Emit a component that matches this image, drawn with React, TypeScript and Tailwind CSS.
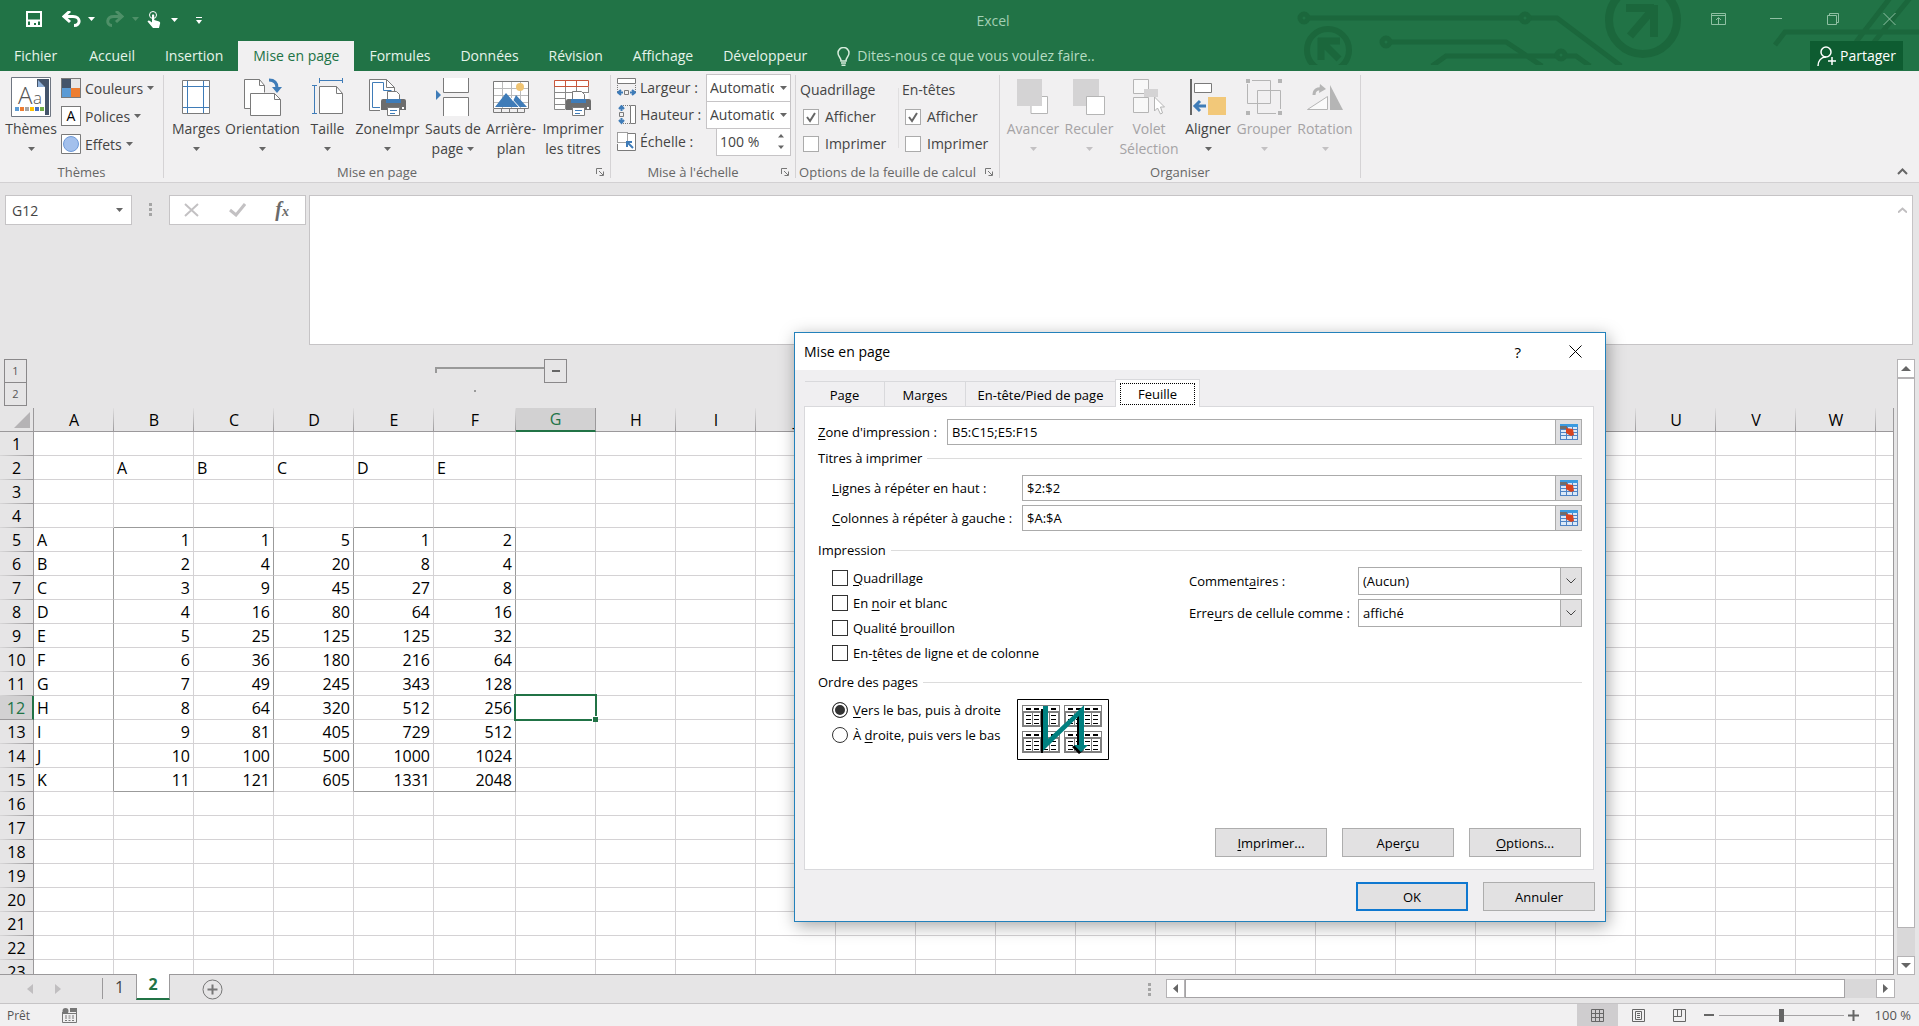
import type { ReactNode } from 'react';

const TABS = ['Accueil', 'Insertion', 'Mise en page', 'Formules', 'Données', 'Révision', 'Affichage', 'Développeur'];

const COLUMNS = 'ABCDEFGHIJKLMNOPQRSTUVWX'.split('');
const ROW_COUNT = 23;

const LETTERS = 'ABCDEFGHIJK'.split('');
const SERIES = LETTERS.map((letter, i) => {
  const n = i + 1;
  return [letter, n, n * n, 5 * n * n, n * n * n, 2 ** n];
});

function cellValue(row: number, col: number): string | number {
  if (row === 2 && col >= 1 && col <= 5) return LETTERS[col - 1];
  if (row >= 5 && row <= 15 && col <= 5) return SERIES[row - 5][col];
  return '';
}

// grey frame round the two print areas B5:C15 and E5:F15
function cellBorders(row: number, col: number) {
  const inRows = row >= 5 && row <= 15;
  const inArea = col === 1 || col === 2 || col === 4 || col === 5;
  const right = inRows && (col === 0 || col === 2 || col === 3 || col === 5);
  const bottom = inArea && (row === 4 || row === 15);
  return `${right ? 'border-r-[#9b9b9b]' : 'border-r-[#d4d2d4]'} ${bottom ? 'border-b-[#9b9b9b]' : 'border-b-[#d4d2d4]'}`;
}

/* ---------- small pieces ---------- */

function Caret({ className = 'text-[#666]' }: { className?: string }) {
  return (
    <svg width="7" height="4" viewBox="0 0 7 4" className={`shrink-0 ${className}`}>
      <path d="M0 0h7L3.5 4z" fill="currentColor" />
    </svg>
  );
}

function Launcher() {
  return (
    <button aria-label="Plus d'options" className="flex w-5 items-center justify-center">
      <svg width="8" height="8" viewBox="0 0 8 8" fill="none" stroke="#777">
        <path d="M.5 6V.5H6M3 3l4 4" />
        <path d="M7.5 3.5v4h-4" />
      </svg>
    </button>
  );
}

// underlines the access key that follows "&"
function Mnemonic({ text }: { text: string }) {
  const at = text.indexOf('&');
  if (at < 0) return <>{text}</>;
  return (
    <span className="whitespace-pre">
      {text.slice(0, at)}
      <span className="underline underline-offset-2">{text[at + 1]}</span>
      {text.slice(at + 2)}
    </span>
  );
}

/* ---------- ribbon icons ---------- */

const GREY = '#7a7a7a';
const BLUE = '#3f7cb8';

function Printer({ x, y }: { x: number; y: number }) {
  return (
    <g transform={`translate(${x} ${y})`}>
      <path d="M6.500.5h9l3 3V9h-12z" fill="#fff" stroke={GREY} />
      <path d="M2 8h21q2 0 2 2v9H0v-9q0-2 2-2z" fill="#6d6d6d" />
      <path d="M5 8h15v4H5z" fill={BLUE} />
      <path d="M21 16h2v2h-2z" fill="#fff" />
      <path d="M6.500 16.500h12v8h-12z" fill="#fff" stroke={GREY} />
      <path d="M9 19.500h7M9 22.500h5" stroke={BLUE} />
    </g>
  );
}

function ThemesIcon() {
  const swatches = ['#5b9bd5', '#ed7d31', '#a5a5a5', '#ffc000', '#4472c4', '#70ad47'];
  return (
    <svg width="40" height="40" viewBox="0 0 40 40">
      <path d="M.5.5h39v39H.5z" fill="#fff" stroke="#6f7682" />
      <path d="M2 2h26l6 7v29H2z" fill="#fff" />
      <path d="M26 2h12v36h-4V10h-8z" fill="#44546a" />
      <path d="M27 3l7 7h-7z" fill="#8fb0d8" />
      <text x="7" y="27" fontSize="24" fill="#555" fontFamily="Open Sans, sans-serif" fontWeight="300">A</text>
      <text x="22" y="27" fontSize="17" fill="#555" fontFamily="Open Sans, sans-serif" fontWeight="300">a</text>
      {swatches.map((c, i) => (
        <rect key={c} x={4 + i * 5} y="30" width="4" height="4" fill={c} />
      ))}
    </svg>
  );
}

function MarginsIcon() {
  return (
    <svg width="28" height="34" viewBox="0 0 28 34" fill="none">
      <path d="M.5.5h27v33H.5z" fill="#fff" stroke={GREY} />
      <path d="M5.500 1v32M21.500 1v32M1 6.500h26M1 27.500h26" stroke={BLUE} />
    </svg>
  );
}

function OrientationIcon() {
  return (
    <svg width="38" height="38" viewBox="0 0 38 38" fill="#fff" stroke={GREY}>
      <path d="M7 30.500H.5V1.500h15l5 6v7" />
      <path d="M15.500 1.500v6h5" fill="none" />
      <path d="M6.500 15.500h24l6 6v16h-30z" />
      <path d="M30.500 15.500v6h6" fill="none" />
      <path d="M25 2c6 0 8 3 8 8" fill="none" stroke={BLUE} strokeWidth="3" />
      <path d="M28 9h10l-5 6z" fill={BLUE} stroke="none" />
    </svg>
  );
}

function SizeIcon() {
  return (
    <svg width="32" height="37" viewBox="0 0 32 37" fill="none">
      <path d="M7.500 8.500h17l6 7v20h-23z" fill="#fff" stroke={GREY} />
      <path d="M24.500 8.500v7h6" stroke={GREY} />
      <path d="M7.500 0v5M30.500 0v5M8 2.500h22M0 7.500h5M0 35.500h5M2.500 8v27" stroke={BLUE} />
    </svg>
  );
}

function PrintAreaIcon() {
  return (
    <svg width="38" height="38" viewBox="0 0 38 38" fill="none">
      <path d="M11 32.500H.5v-31h17l8 8v5" fill="#fff" stroke={GREY} />
      <path d="M17.500 1.500v8h8" stroke={GREY} />
      <path d="M11 29.500H3.500v-25h11v8h8" stroke={BLUE} />
      <Printer x={12} y={13} />
    </svg>
  );
}

function BreaksIcon() {
  return (
    <svg width="34" height="38" viewBox="0 0 34 38" fill="none">
      <path d="M7.500 0v14.500h25V0M7.500 38V19.500h25V38" fill="#fff" stroke={GREY} />
      <path d="M0 12l5 5-5 5z" fill={BLUE} />
    </svg>
  );
}

function BackgroundIcon() {
  return (
    <svg width="36" height="32" viewBox="0 0 36 32" fill="none">
      <path d="M.5.5h35v27H.5z" fill="#fff" stroke={GREY} />
      <path d="M9.500 1v26M18.500 1v26M27.500 1v26M1 7.500h34M1 14.500h34M1 21.500h34" stroke="#bbb" />
      <path d="M2 26l11-14 7 8 3-6 11 12z" fill={BLUE} />
      <path d="M18 17l9 10" stroke="#fff" />
      <circle cx="27" cy="6" r="4" fill="#f0c473" />
      <path d="M.5 28v3.500h31V28M8.500 28v3M16.500 28v3M24.500 28v3" stroke={GREY} />
    </svg>
  );
}

function PrintTitlesIcon() {
  return (
    <svg width="38" height="38" viewBox="0 0 38 38" fill="none">
      <path d="M.5 2.500h34v29H.5z" fill="#fff" />
      <path d="M.5 8v23.500h11M1 14.500h33M1 20.500h11M1 26.500h11M11.500 9v22M22.500 9v6M34.500 9v6" stroke="#8a8a8a" />
      <path d="M.5 2.500h34v6H.5zM11.500 3v5M22.500 3v5" stroke="#c8553a" />
      <Printer x={12} y={13} />
    </svg>
  );
}

function ForwardIcon() {
  return (
    <svg width="32" height="36" viewBox="0 0 32 36" fill="none">
      <path d="M14 17.500h16.500v17H14z" fill="#fff" stroke="#b5b5b5" />
      <path d="M0 0h25v27H0z" fill="#d4d3d4" />
    </svg>
  );
}

function BackwardIcon() {
  return (
    <svg width="32" height="36" viewBox="0 0 32 36" fill="none">
      <path d="M0 0h26v27H0z" fill="#d4d3d4" />
      <path d="M13.500 17.500h18v18h-18z" fill="#fff" stroke="#b5b5b5" />
    </svg>
  );
}

function SelectionIcon() {
  return (
    <svg width="32" height="36" viewBox="0 0 32 36" fill="none" stroke="#b5b5b5">
      <path d="M.5.500h15v14H.5zM.5 18.500h15v15H.5z" fill="#f8f8f8" />
      <path d="M11 10h14v8H11z" fill="#d4d3d4" stroke="none" />
      <path d="M21.500 18v14l3-3 3 6 2-1-2-6h4z" fill="#fff" />
    </svg>
  );
}

function AlignIcon() {
  return (
    <svg width="36" height="36" viewBox="0 0 36 36" fill="none">
      <path d="M1 0v36" stroke="#666" strokeWidth="2" />
      <path d="M4.500 4.500h17v9h-17z" fill="#fff" stroke={GREY} />
      <path d="M18 18h18v18H18z" fill="#f2c879" />
      <path d="M16 27H6M10 22l-5 5 5 5" stroke={BLUE} strokeWidth="3" />
    </svg>
  );
}

function GroupIcon() {
  return (
    <svg width="36" height="36" viewBox="0 0 36 36" fill="none" stroke="#b5b5b5">
      <path d="M1.500 5v19.500h23v-23H6M11.500 11.500h23V30M30 34.500H11.500v-23" />
      <path d="M0 0h4v4H0zM32 0h4v4h-4zM0 32h4v4H0zM32 32h4v4h-4z" fill="#b5b5b5" stroke="none" />
    </svg>
  );
}

function RotateIcon() {
  return (
    <svg width="36" height="26" viewBox="0 0 36 26" fill="none" stroke="#b5b5b5">
      <path d="M.5 25.500l20-13v13z" fill="#fafafa" />
      <path d="M23 1v25h13z" fill="#b5b5b5" stroke="none" />
      <path d="M7 11c0-5 3-7 9-6" strokeWidth="3" />
      <path d="M13 0l6 5-7 4z" fill="#b5b5b5" stroke="none" />
    </svg>
  );
}

function WidthIcon() {
  return (
    <svg width="19" height="20" viewBox="0 0 19 20" fill="none">
      <path d="M.5.500h18v5H.5z" fill="#fff" stroke={GREY} />
      <path d="M.5 7v7M18.500 7v7" stroke={GREY} strokeDasharray="1 1" />
      <path d="M7.500 12.500h4v4h-4z" stroke={GREY} />
      <path d="M6 14.500H1M4 12l-3 2.500L4 17M13 14.500h5M15 12l3 2.500-3 2.500" stroke={BLUE} strokeWidth="2" />
    </svg>
  );
}

function HeightIcon() {
  return (
    <svg width="19" height="20" viewBox="0 0 19 20" fill="none">
      <path d="M13.500.500h5v18h-5z" fill="#fff" stroke={GREY} />
      <path d="M6 .5h7M6 18.500h7" stroke={GREY} strokeDasharray="1 1" />
      <path d="M2.500 7.500h4v4h-4z" stroke={GREY} />
      <path d="M4.500 6V1M2 4l2.500-3L7 4M4.500 13v5M2 15l2.500 3L7 15" stroke={BLUE} strokeWidth="2" />
    </svg>
  );
}

function ScaleIcon() {
  return (
    <svg width="19" height="20" viewBox="0 0 19 20" fill="none">
      <path d="M11 1.500h7.500v17H.5V12" fill="#fff" stroke={GREY} />
      <path d="M.5.500h10v10H.5z" fill="#fff" stroke="#444" strokeDasharray="1 1" />
      <path d="M10 10l6 6M10 15v-5h5" stroke={BLUE} strokeWidth="2" />
    </svg>
  );
}

/* ---------- ribbon ---------- */

function BigButton({ icon, lines, width, caret, disabled }: {
  icon: ReactNode;
  lines: string[];
  width: string;
  caret?: 'below' | 'inline';
  disabled?: boolean;
}) {
  return (
    <button
      disabled={disabled}
      className={`flex flex-col items-center leading-5 whitespace-nowrap ${width} ${disabled ? 'text-[#a5a3a5]' : 'text-[#444]'}`}
    >
      <span className="flex h-[45px] items-center justify-center">{icon}</span>
      <span>{lines[0]}</span>
      <span className="flex h-5 items-center gap-1">
        {lines[1]}
        {caret && <Caret className={disabled ? 'text-[#c3c1c3]' : 'text-[#666]'} />}
      </span>
    </button>
  );
}

function SmallButton({ icon, label }: { icon: ReactNode; label: string }) {
  return (
    <button className="flex h-7 items-center gap-1">
      {icon}
      <span>{label}</span>
      <Caret />
    </button>
  );
}

function Group({ label, launcher, children }: { label: string; launcher?: boolean; children: ReactNode }) {
  return (
    <>
      <section className="flex shrink-0 flex-col">
        <div className="flex h-[91px] items-start">{children}</div>
        <div className="flex h-5 text-[13px] leading-5 text-[#666]">
          <span className="flex-1 text-center">{label}</span>
          {launcher && <Launcher />}
        </div>
      </section>
      <div className="my-1 w-px shrink-0 bg-[#d5d3d5]" />
    </>
  );
}

function RibbonCheck({ label, checked, name }: { label: string; checked?: boolean; name: string }) {
  return (
    <label className="flex h-[27px] items-center gap-1.5 whitespace-nowrap">
      <span className="grid size-4">
        <input
          type="checkbox"
          name={name}
          defaultChecked={checked}
          className="peer col-start-1 row-start-1 size-4 appearance-none border border-[#ababab] bg-white"
        />
        <svg viewBox="0 0 16 16" className="pointer-events-none invisible col-start-1 row-start-1 peer-checked:visible">
          <path d="M4 8l3 4 5-8" fill="none" stroke="#666" strokeWidth="2" />
        </svg>
      </span>
      {label}
    </label>
  );
}

function AutoSelect({ id, icon, label }: { id: string; icon: ReactNode; label: string }) {
  return (
    <div className="flex h-[27px] items-center">
      {icon}
      <label htmlFor={id} className="w-[70px] pl-1">{label}</label>
      <div className="grid h-7 w-[85px] grid-cols-1 items-center">
        <select
          id={id}
          className="col-start-1 row-start-1 h-7 w-full min-w-0 appearance-none border border-[#c6c4c6] bg-white pr-4 pl-[3px]"
        >
          <option>Automatique</option>
        </select>
        <Caret className="pointer-events-none col-start-1 row-start-1 mr-1 justify-self-end text-[#666]" />
      </div>
    </div>
  );
}

function Ribbon() {
  return (
    <div className="flex h-[112px] shrink-0 border-b border-[#d2d0d2] bg-[#f1f0f1] text-[14px] text-[#444]">
      <Group label="Thèmes">
        <div className="flex w-[163px] items-start gap-1 pt-[3px] pl-[5px]">
          <BigButton icon={<ThemesIcon />} lines={['Thèmes']} width="w-[52px]" caret="below" />
          <div className="flex flex-col">
            <SmallButton
              label="Couleurs"
              icon={
                <svg width="20" height="20" viewBox="0 0 20 20">
                  <path d="M0 0h20v20H0z" fill="#7a7a7a" />
                  <path d="M1 1h9v9H1z" fill="#44546a" />
                  <path d="M10 1h9v9h-9z" fill="#e7e6e6" />
                  <path d="M1 10h9v9H1z" fill="#5b9bd5" />
                  <path d="M10 10h9v9h-9z" fill="#ed7d31" />
                </svg>
              }
            />
            <SmallButton
              label="Polices"
              icon={
                <span className="flex size-5 items-center justify-center border border-[#7a7a7a] bg-white text-[14px] leading-4 text-black">
                  A
                </span>
              }
            />
            <SmallButton
              label="Effets"
              icon={
                <svg width="20" height="20" viewBox="0 0 20 20">
                  <path d="M.5.500h19v19H.5z" fill="#fff" stroke="#7a7a7a" />
                  <circle cx="10" cy="10" r="7.500" fill="#a3c0ec" stroke="#6f9ad8" />
                </svg>
              }
            />
          </div>
        </div>
      </Group>

      <Group label="Mise en page" launcher>
        <div className="flex pt-[3px] pr-[3px] pl-[6px]">
          <BigButton icon={<MarginsIcon />} lines={['Marges']} width="w-[52px]" caret="below" />
          <BigButton icon={<OrientationIcon />} lines={['Orientation']} width="w-[81px]" caret="below" />
          <BigButton icon={<SizeIcon />} lines={['Taille']} width="w-[49px]" caret="below" />
          <BigButton icon={<PrintAreaIcon />} lines={['ZoneImpr']} width="w-[71px]" caret="below" />
          <BigButton icon={<BreaksIcon />} lines={['Sauts de', 'page']} width="w-[60px]" caret="inline" />
          <BigButton icon={<BackgroundIcon />} lines={['Arrière-', 'plan']} width="w-[56px]" />
          <BigButton icon={<PrintTitlesIcon />} lines={['Imprimer', 'les titres']} width="w-[68px]" />
        </div>
      </Group>

      <Group label="Mise à l'échelle" launcher>
        <div className="flex flex-col pt-[3px] pr-1 pl-[6px]">
          <AutoSelect id="largeur" label="Largeur :" icon={<WidthIcon />} />
          <AutoSelect id="hauteur" label="Hauteur :" icon={<HeightIcon />} />
          <div className="flex h-[27px] items-center">
            <ScaleIcon />
            <label htmlFor="echelle" className="w-20 pl-1">Échelle :</label>
            <div className="flex h-7 w-[75px] items-center border border-[#c6c4c6] bg-white pr-[5px] pl-[3px]">
              <input id="echelle" defaultValue="100 %" className="w-full min-w-0 flex-1 outline-none" />
              <svg width="7" height="15" viewBox="0 0 7 15" fill="#666">
                <path d="M0 3.500h6L3 0zM0 11.500h6L3 15z" />
              </svg>
            </div>
          </div>
        </div>
      </Group>

      <Group label="Options de la feuille de calcul" launcher>
        <div className="flex pt-[5px] pr-4 pl-1">
          <div className="flex w-[98px] flex-col">
            <span className="h-[27px] leading-[27px]">Quadrillage</span>
            <div className="pl-[3px]">
              <RibbonCheck label="Afficher" name="quadrillage-afficher" checked />
              <RibbonCheck label="Imprimer" name="quadrillage-imprimer" />
            </div>
          </div>
          <div className="mt-3 h-[60px] w-px bg-[#e0dfe0]" />
          <div className="flex w-[84px] flex-col pl-[3px]">
            <span className="h-[27px] leading-[27px]">En-têtes</span>
            <div className="pl-[3px]">
              <RibbonCheck label="Afficher" name="entetes-afficher" checked />
              <RibbonCheck label="Imprimer" name="entetes-imprimer" />
            </div>
          </div>
        </div>
      </Group>

      <Group label="Organiser">
        <div className="flex pt-[3px] pr-[3px] pl-[5px]">
          <BigButton icon={<ForwardIcon />} lines={['Avancer']} width="w-[56px]" caret="below" disabled />
          <BigButton icon={<BackwardIcon />} lines={['Reculer']} width="w-[56px]" caret="below" disabled />
          <BigButton icon={<SelectionIcon />} lines={['Volet', 'Sélection']} width="w-[64px]" disabled />
          <BigButton icon={<AlignIcon />} lines={['Aligner']} width="w-[54px]" caret="below" />
          <BigButton icon={<GroupIcon />} lines={['Grouper']} width="w-[58px]" caret="below" disabled />
          <BigButton icon={<RotateIcon />} lines={['Rotation']} width="w-[64px]" caret="below" disabled />
        </div>
      </Group>

      <button aria-label="Réduire le ruban" className="mr-[11px] mb-[7px] ml-auto self-end">
        <svg width="11" height="7" viewBox="0 0 11 7" fill="none" stroke="#666" strokeWidth="2">
          <path d="M1 6l4.500-4.500L10 6" />
        </svg>
      </button>
    </div>
  );
}

/* ---------- title bar ---------- */

function Circuit() {
  return (
    <svg
      width="629"
      height="65"
      viewBox="0 0 629 65"
      fill="none"
      stroke="#1b673c"
      className="pointer-events-none absolute top-0 right-0"
    >
      <g strokeWidth="5">
        <circle cx="14" cy="18" r="4" />
        <path d="M19 18h211M240 18h27l64 48" />
        <circle cx="235" cy="18" r="4" />
        <circle cx="96" cy="42" r="4" />
        <path d="M101 42h115l36 24M142 66l14-10h110" />
        <circle cx="271" cy="55" r="4" />
        <path d="M276 56h10l14 10M485 45l10-13h134M566 42l34-44M584 42l36-44" />
      </g>
      <circle cx="38" cy="50" r="21" strokeWidth="6" />
      <path d="M28 41h22M31 38v22M31 41l18 18" strokeWidth="7" />
      <circle cx="353" cy="20" r="34" strokeWidth="8" />
      <path d="M336 8h28M364 5v32M364 8l-24 28" strokeWidth="8" />
    </svg>
  );
}

function TitleBar() {
  return (
    <header className="relative flex shrink-0 flex-col bg-[#217346] text-[14px] text-[#e6f4ea]">
      <Circuit />
      <div className="relative flex h-[41px]">
        <div className="flex w-[286px] items-start pt-[11px] pl-[26px]">
          <button aria-label="Enregistrer">
            <svg width="16" height="16" viewBox="0 0 16 16" fill="none" stroke="#fff" strokeWidth="2">
              <path d="M1 1h14v14H1zM1 9.500h14" />
              <path d="M5 15v-4h6v4M7 12v3" />
            </svg>
          </button>
          <button aria-label="Annuler" className="ml-5 flex items-center gap-[7px]">
            <svg width="19" height="16" viewBox="0 0 19 16" fill="none" stroke="#fff" strokeWidth="3">
              <path d="M3 5.500h8c8 0 8 9 1 9" />
              <path d="M8 0L2 5.500 8 11" />
            </svg>
            <Caret className="text-white" />
          </button>
          <button aria-label="Rétablir" disabled className="ml-[10px] flex items-center gap-2">
            <svg width="19" height="16" viewBox="0 0 19 16" fill="none" stroke="#4e9068" strokeWidth="3">
              <path d="M16 5.500H9c-8 0-8 9-2 9" />
              <path d="M11 0l6 5.500L11 11" />
            </svg>
            <Caret className="text-[#4e9068]" />
          </button>
          <button aria-label="Mode tactile" className="ml-2 flex items-center gap-[10px]">
            <svg width="14" height="17" viewBox="0 0 14 17">
              <circle cx="6" cy="4" r="3.500" fill="none" stroke="#fff" />
              <path d="M5 4q1-1.500 2.200 0v5l5 1.500q1 .5 1 1.500L12 17H6L.5 10.500q1-1.500 2.500-.5l2 1.500z" fill="#fff" />
            </svg>
            <Caret className="text-white" />
          </button>
          <button aria-label="Personnaliser la barre" className="mt-[6px] ml-[18px]">
            <svg width="6" height="7" viewBox="0 0 6 7" fill="#fff">
              <path d="M0 0h6v1H0zM0 3h6L3 7z" />
            </svg>
          </button>
        </div>
        <h1 className="flex-1 text-center leading-[41px] text-[#a3cfb4]">Excel</h1>
        <div className="flex w-[219px] items-start justify-between pt-[13px] pr-[23px] pl-[11px] text-[#8fc0a3]">
          <button aria-label="Options du ruban">
            <svg width="15" height="12" viewBox="0 0 15 12" fill="none" stroke="currentColor">
              <path d="M.5.500h14v11H.5zM1 2.500h13M7.500 11V5M5 7l2.500-2.500L10 7" />
            </svg>
          </button>
          <button aria-label="Réduire">
            <svg width="12" height="12" viewBox="0 0 12 12" stroke="currentColor">
              <path d="M0 5.500h12" />
            </svg>
          </button>
          <button aria-label="Niveau inférieur">
            <svg width="12" height="12" viewBox="0 0 12 12" fill="none" stroke="currentColor">
              <path d="M.5 2.500h9v9h-9zM2.500 2V.500h9v9H10" />
            </svg>
          </button>
          <button aria-label="Fermer">
            <svg width="13" height="12" viewBox="0 0 13 12" fill="none" stroke="currentColor">
              <path d="M.5 0l12 12M12.500 0l-12 12" />
            </svg>
          </button>
        </div>
      </div>
      <nav className="relative flex h-[30px] items-stretch leading-[30px] whitespace-nowrap">
        <button className="pr-[17px] pl-[14px]">Fichier</button>
        {TABS.map((tab) => (
          <button
            key={tab}
            className={tab === 'Mise en page' ? 'bg-[#f1f0f1] px-[15px] text-[#217346]' : 'px-[15px]'}
          >
            {tab}
          </button>
        ))}
        <div className="ml-[15px] flex items-center gap-[7px]">
          <svg width="13" height="19" viewBox="0 0 13 19" fill="none" stroke="#d5ecdc" strokeWidth="1.500">
            <path d="M4 14c0-4-3-4-3-8a5.500 5.500 0 0 1 11 0c0 4-3 4-3 8zM4 16h5M4.500 18.200h4" />
          </svg>
          <input
            aria-label="Dites-nous"
            placeholder="Dites-nous ce que vous voulez faire.."
            className="w-[270px] bg-transparent outline-none placeholder:text-[#b5dcc2]"
          />
        </div>
        <button className="mr-4 mb-px ml-auto flex w-[93px] items-center gap-1 bg-[#0e5c31] pl-[7px] text-white">
          <svg width="19" height="20" viewBox="0 0 19 20" fill="none" stroke="#fff" strokeWidth="1.500">
            <circle cx="9" cy="6" r="5" />
            <path d="M1 20c0-5 3-9 8-9M15 11v8M11 15h8" />
          </svg>
          Partager
        </button>
      </nav>
    </header>
  );
}

/* ---------- formula bar and outline ---------- */

function FormulaBar() {
  return (
    <div className="flex shrink-0 items-start pt-3 pr-[6px] pl-[5px]">
      <div className="flex h-[30px] w-[127px] items-center border border-[#c6c4c6] bg-white pr-2 pl-[6px]">
        <input aria-label="Zone Nom" defaultValue="G12" className="w-full min-w-0 flex-1 text-[14px] text-[#444] outline-none" />
        <Caret />
      </div>
      <svg width="3" height="14" viewBox="0 0 3 14" fill="#a5a5a5" className="mx-[17px] mt-2">
        <path d="M0 0h3v3H0zM0 5h3v3H0zM0 10h3v3H0z" />
      </svg>
      <div className="flex h-[30px] w-[137px] items-center justify-between border border-[#c6c4c6] bg-white pr-4 pl-[14px]">
        <button aria-label="Annuler la saisie" disabled>
          <svg width="15" height="14" viewBox="0 0 15 14" fill="none" stroke="#c3c1c3" strokeWidth="2">
            <path d="M1 1l13 12M14 1L1 13" />
          </svg>
        </button>
        <button aria-label="Entrer" disabled>
          <svg width="17" height="14" viewBox="0 0 17 14" fill="none" stroke="#c3c1c3" strokeWidth="3">
            <path d="M1 7l6 5 9-11" />
          </svg>
        </button>
        <button aria-label="Insérer une fonction" className="font-['Liberation_Serif',serif] text-[20px] leading-6 font-bold text-[#6a6a6a] italic">
          f<span className="text-[14px]">x</span>
        </button>
      </div>
      <div className="ml-[3px] flex h-[150px] flex-1 border border-[#c6c4c6] bg-white">
        <textarea aria-label="Barre de formule" className="flex-1 resize-none outline-none" />
        <svg width="9" height="6" viewBox="0 0 9 6" fill="none" stroke="#c0bec0" strokeWidth="2" className="mt-[11px] mr-[5px]">
          <path d="M0 5.500l4.500-4 4.500 4" />
        </svg>
      </div>
    </div>
  );
}

const outlineButton = 'flex h-6 w-[23px] items-center justify-center border border-[#8a888a] text-[11px] text-[#555]';

function Outline() {
  return (
    <div className="flex h-[49px] shrink-0 items-start">
      <div className="flex w-[431px] flex-col pl-1">
        <button className={outlineButton}>1</button>
        <button className={`${outlineButton} -mt-px`}>2</button>
      </div>
      <svg width="109" height="40" viewBox="0 0 109 40" className="ml-1">
        <path d="M1 14V9h108" fill="none" stroke="#999" strokeWidth="2" />
        <path d="M39 31h2v2h-2z" fill="#999" />
      </svg>
      <button aria-label="Masquer le détail" className={outlineButton}>
        <svg width="8" height="2" viewBox="0 0 8 2"><path d="M0 0h8v2H0z" fill="#666" /></svg>
      </button>
    </div>
  );
}

/* ---------- sheet ---------- */

function Sheet() {
  return (
    <div className="min-w-0 flex-1 overflow-hidden border-r border-b border-[#9b999b] bg-[linear-gradient(to_bottom,#e6e5e6_24px,#fff_24px)]">
      <table className="w-[1956px] table-fixed border-separate border-spacing-0 text-[16px] leading-[21px] text-black">
        <colgroup>
          <col className="w-[34px]" />
          {COLUMNS.map((c) => (
            <col key={c} className={c === 'F' ? 'w-[82px]' : 'w-[80px]'} />
          ))}
        </colgroup>
        <thead>
          <tr className="h-6">
            <th className="border-r border-b border-[#9b999b] bg-[#e6e5e6] p-0">
              <svg width="16" height="16" viewBox="0 0 16 16" className="mr-[3px] ml-auto">
                <path d="M16 0v16H0z" fill="#b5b3b5" />
              </svg>
            </th>
            {COLUMNS.map((c) => (
              <th
                key={c}
                className={
                  c === 'G'
                    ? 'border-r border-b-2 border-r-[#9b999b] border-b-[#217346] bg-[#d2d1d2] p-0 pt-px font-normal text-[#217346]'
                    : 'border-b border-[#9b999b] bg-[#e6e5e6] bg-[linear-gradient(to_bottom,#e0dfe0,#9b999b)] bg-[length:1px_100%] bg-right bg-no-repeat p-0 pt-0.5 font-normal'
                }
              >
                {c}
              </th>
            ))}
          </tr>
        </thead>
        <tbody>
          {Array.from({ length: ROW_COUNT }, (_, i) => i + 1).map((row) => (
            <tr key={row} className="h-6">
              <th
                className={
                  row === 12
                    ? 'border-r-2 border-b border-r-[#217346] border-b-[#9b999b] bg-[#d2d1d2] p-0 pt-0.5 font-normal text-[#217346]'
                    : 'border-r border-[#9b999b] bg-[#e6e5e6] bg-[linear-gradient(to_right,#d8d7d8,#9b999b)] bg-[length:100%_1px] bg-bottom bg-no-repeat p-0 pt-px font-normal'
                }
              >
                {row}
              </th>
              {COLUMNS.map((c, col) => {
                const value = cellValue(row, col);
                return (
                  <td
                    key={c}
                    className={`relative border-r border-b px-[3px] pt-0.5 pb-0 ${cellBorders(row, col)} ${typeof value === 'number' ? 'text-right' : 'text-left'}`}
                  >
                    {value}
                    {row === 12 && c === 'G' && (
                      <span className="absolute -inset-[2px] z-10 border-2 border-[#217346]">
                        <span className="absolute -right-[3px] -bottom-[3px] size-[6px] border-t border-l border-white bg-[#217346]" />
                      </span>
                    )}
                  </td>
                );
              })}
            </tr>
          ))}
        </tbody>
      </table>
    </div>
  );
}

function VerticalScroll() {
  const end = 'flex h-[19px] items-center justify-center border border-[#b5b3b5] bg-white';
  return (
    <div className="mr-1 ml-[3px] flex w-[18px] flex-col bg-[#d9d8d9]">
      <button aria-label="Défiler vers le haut" className={end}>
        <svg width="10" height="5" viewBox="0 0 10 5"><path d="M0 5h10L5 0z" fill="#666" /></svg>
      </button>
      <div className="mb-7 flex-1 border border-[#b5b3b5] bg-white" />
      <button aria-label="Défiler vers le bas" className={end}>
        <svg width="10" height="5" viewBox="0 0 10 5"><path d="M0 0h10L5 5z" fill="#666" /></svg>
      </button>
    </div>
  );
}

function SheetTabs() {
  return (
    <div className="flex h-7 shrink-0 items-start text-[16px]">
      <div className="flex h-7 w-[102px] items-center gap-[22px] pl-[27px]">
        <button aria-label="Feuille précédente" disabled>
          <svg width="6" height="10" viewBox="0 0 6 10"><path d="M6 0v10L0 5z" fill="#c0bec0" /></svg>
        </button>
        <button aria-label="Feuille suivante" disabled>
          <svg width="6" height="10" viewBox="0 0 6 10"><path d="M0 0v10l6-5z" fill="#c0bec0" /></svg>
        </button>
      </div>
      <button className="mt-[3px] h-[21px] w-[34px] border-l border-[#9b999b] pb-1 leading-4 text-[#444]">1</button>
      <button className="-mt-px h-[26px] w-[34px] border-x border-b-2 border-x-[#9b999b] border-b-[#217346] bg-white pb-1 leading-5 font-bold text-[#217346]">2</button>
      <button aria-label="Nouvelle feuille" className="mt-1 ml-8">
        <svg width="21" height="21" viewBox="0 0 21 21" fill="none" stroke="#777">
          <circle cx="10.500" cy="10.500" r="9.500" />
          <path d="M10.500 5.500v10M5.500 10.500h10" strokeWidth="2" />
        </svg>
      </button>
      <svg width="3" height="13" viewBox="0 0 3 13" fill="#a5a5a5" className="mt-2 ml-auto">
        <path d="M0 0h3v3H0zM0 5h3v3H0zM0 10h3v3H0z" />
      </svg>
      <div className="mt-1 mr-6 ml-[15px] flex h-[19px] w-[38%] bg-[#d9d8d9]">
        <button aria-label="Défiler à gauche" className="flex w-[19px] items-center justify-center border border-[#b5b3b5] bg-white">
          <svg width="5" height="9" viewBox="0 0 5 9"><path d="M5 0v9L0 4.500z" fill="#666" /></svg>
        </button>
        <div className="mr-[31px] flex-1 border border-[#a5a3a5] bg-white" />
        <button aria-label="Défiler à droite" className="flex w-[19px] items-center justify-center border border-[#b5b3b5] bg-white">
          <svg width="5" height="9" viewBox="0 0 5 9"><path d="M0 0v9l5-4.500z" fill="#666" /></svg>
        </button>
      </div>
    </div>
  );
}

function StatusBar() {
  return (
    <footer className="flex h-[23px] shrink-0 items-stretch border-t border-[#c6c4c6] bg-[#f1f0f1] pr-2 pl-[7px] text-[12px] leading-[23px] text-[#555]">
      <span className="w-[55px]">Prêt</span>
      <svg width="15" height="15" viewBox="0 0 15 15" fill="none" stroke="#777" className="mt-1">
        <path d="M.5 4v10.500h14V1M1 5.500h13M3 8h2M6.500 8h2M10 8h2M3 10h2M6.500 10h2M10 10h2M3 12.500h2M6.500 12.500h2M10 12.500h2" />
        <circle cx="3.500" cy="3" r="3" fill="#777" stroke="none" />
        <path d="M8 0h7v4H8z" fill="#777" stroke="none" />
      </svg>
      <div className="ml-auto flex items-stretch">
        <button aria-label="Normal" className="flex w-[41px] items-center justify-center bg-[#cfcdcf]">
          <svg width="13" height="13" viewBox="0 0 13 13" fill="none" stroke="#666">
            <path d="M.5.500h12v12H.5zM4.500 0v13M8.500 0v13M0 4.500h13M0 8.500h13" />
          </svg>
        </button>
        <button aria-label="Mise en page" className="flex w-[41px] items-center justify-center">
          <svg width="13" height="13" viewBox="0 0 13 13" fill="none" stroke="#666">
            <path d="M.5.500h12v12H.5zM3.500 2.500h6v8h-6zM5 4.500h3M5 6.500h3M5 8.500h3" />
          </svg>
        </button>
        <button aria-label="Avec sauts de page" className="flex w-[41px] items-center justify-center">
          <svg width="13" height="13" viewBox="0 0 13 13" fill="none" stroke="#666">
            <path d="M.5.500h12v12H.5zM.5 7.500h8V0M4.500 0v7" />
          </svg>
        </button>
        <button aria-label="Zoom arrière" className="ml-1 flex w-[15px] items-center">
          <svg width="10" height="2" viewBox="0 0 10 2"><path d="M0 0h10v2H0z" fill="#666" /></svg>
        </button>
        <input
          type="range"
          aria-label="Zoom"
          defaultValue={50}
          className="w-[125px] appearance-none bg-[linear-gradient(#a5a3a5,#a5a3a5)] bg-[length:100%_1px] bg-center bg-no-repeat [&::-webkit-slider-thumb]:h-[13px] [&::-webkit-slider-thumb]:w-[5px] [&::-webkit-slider-thumb]:appearance-none [&::-webkit-slider-thumb]:bg-[#666]"
        />
        <button aria-label="Zoom avant" className="ml-1 flex items-center">
          <svg width="11" height="11" viewBox="0 0 11 11" stroke="#666" strokeWidth="2"><path d="M5.500 0v11M0 5.500h11" /></svg>
        </button>
        <span className="w-[52px] text-right text-[13px] whitespace-nowrap">100 %</span>
      </div>
    </footer>
  );
}

/* ---------- dialog ---------- */

function RefField({ id, label, labelWidth, value }: { id: string; label: string; labelWidth: string; value: string }) {
  return (
    <div className="flex h-[26px] items-center">
      <label htmlFor={id} className={`shrink-0 ${labelWidth}`}><Mnemonic text={label} /></label>
      <input
        id={id}
        defaultValue={value}
        className="h-full min-w-0 flex-1 border border-r-0 border-[#ababab] bg-white pl-1 outline-none"
      />
      <button aria-label="Réduire la boîte de dialogue" className="flex h-full w-[27px] items-center justify-center border border-[#ababab] bg-[#dfdfe1]">
        <svg width="18" height="16" viewBox="0 0 18 16">
          <path d="M0 0h18v16H0z" fill="#4f83c4" />
          <path d="M0 0h18v3H0z" fill="#3a9ae0" />
          <path d="M0 2h7v3H0z" fill="#6e6e6e" />
          <path d="M1 6h5v2H1zM1 9h5v2H1zM1 12h5v3H1zM7 9h5v2H7zM7 12h5v3H7zM13 3h4v2h-4zM13 6h4v2h-4zM13 9h4v2h-4zM13 12h4v3h-4zM8 3h4v2H8z" fill="#dce9f8" />
          <path d="M6 4l7 1 1 6-3 1-5-3z" fill="#d8431f" />
        </svg>
      </button>
    </div>
  );
}

function SectionTitle({ children }: { children: string }) {
  return (
    <div className="flex h-6 items-center gap-[5px]">
      <span>{children}</span>
      <span className="h-px flex-1 bg-[#dcdcdc]" />
    </div>
  );
}

function DialogSelect({ id, label, value }: { id: string; label: string; value: string }) {
  return (
    <div className="flex h-7 items-center">
      <label htmlFor={id} className="w-[169px] whitespace-nowrap"><Mnemonic text={label} /></label>
      <div className="grid h-7 w-56">
        <select id={id} className="col-start-1 row-start-1 appearance-none border border-[#ababab] bg-white pl-1">
          <option>{value}</option>
        </select>
        <span className="pointer-events-none col-start-1 row-start-1 flex w-[22px] items-center justify-center justify-self-end border border-[#ababab] bg-[#e2e1e2]">
          <svg width="10" height="6" viewBox="0 0 10 6" fill="none" stroke="#444"><path d="M.5.500L5 5 9.500.500" /></svg>
        </span>
      </div>
    </div>
  );
}

function MiniTable({ x, y }: { x: number; y: number }) {
  return (
    <g transform={`translate(${x} ${y})`} shapeRendering="crispEdges">
      <path d="M0 0h38v22H0z" fill="#808080" />
      <path d="M1 1h36v5H1zM2 8h8v12H2zM11 8h7v12h-7zM20 8h7v12h-7zM28 8h8v12h-8z" fill="#fff" />
      <path d="M4 3h5v2H4zM12 3h5v2h-5zM21 3h5v2h-5zM29 3h5v2h-5z" fill="#000" />
      <path d="M4 10h5v1H4zM4 14h5v1H4zM4 18h5v1H4zM12 10h5v1h-5zM12 14h5v1h-5zM12 18h5v1h-5zM21 10h5v1h-5zM21 14h5v1h-5zM21 18h5v1h-5zM29 10h5v1h-5zM29 14h5v1h-5zM29 18h5v1h-5z" fill="#000" />
    </g>
  );
}

function PageOrderPreview() {
  return (
    <svg width="92" height="61" viewBox="0 0 92 61">
      <path d="M.5.500h91v60H.5z" fill="#fff" stroke="#000" />
      <MiniTable x={5} y={6} />
      <MiniTable x={47} y={6} />
      <MiniTable x={5} y={32} />
      <MiniTable x={47} y={32} />
      <path d="M24 10h2v44h-2zM60 17h3v30h-3zM55 48l3-2 8 6-4 3z" fill="#000" />
      <path d="M26 7h5v33L64 9l3-3v40h4l-7 7-7-7h5V17L31 47l-5 5z" fill="#008080" />
    </svg>
  );
}

const pushButton = 'h-[29px] w-28 border border-[#adadad] bg-[#e2e1e2]';

function PageSetupDialog() {
  const checks = ['&Quadrillage', 'En &noir et blanc', 'Qualité &brouillon', 'En-&têtes de ligne et de colonne'];
  const orders = ['&Vers le bas, puis à droite', 'À &droite, puis vers le bas'];
  return (
    <div
      role="dialog"
      aria-labelledby="dialog-title"
      className="absolute top-[332px] left-[794px] z-20 w-[812px] border border-[#2381bb] bg-[#f0eff1] text-[13px] leading-[18px] text-black shadow-[2px_4px_16px_rgba(0,0,0,0.35)]"
    >
      <div className="flex h-[37px] items-center bg-white pr-[23px] pl-[9px]">
        <h2 id="dialog-title" className="flex-1 text-[14px]">Mise en page</h2>
        <button aria-label="Aide" className="mr-12 text-[15px]">?</button>
        <button aria-label="Fermer">
          <svg width="13" height="13" viewBox="0 0 13 13" fill="none" stroke="#000"><path d="M.5.500l12 12M12.500.500l-12 12" /></svg>
        </button>
      </div>

      <div className="pt-[9px] pr-[10px] pb-[10px] pl-[9px]">
        <div role="tablist" className="flex h-7 items-end pl-px">
          <button role="tab" className="h-[26px] w-20 border-t border-r border-[#d9d9dc]">Page</button>
          <button role="tab" className="h-[26px] w-[81px] border-t border-r border-[#d9d9dc]">Marges</button>
          <button role="tab" className="h-[26px] w-[149px] border-t border-[#d9d9dc] whitespace-nowrap">En-tête/Pied de page</button>
          <button role="tab" aria-selected className="relative h-7 w-[85px] border border-b-0 border-[#d9d9dc] bg-white px-1 py-[3px]">
            <span className="block h-[22px] border border-dotted border-black leading-5">Feuille</span>
          </button>
        </div>

        <div className="-mt-px mr-px border border-[#d9d9dc] bg-white pt-3 pr-[11px] pb-3 pl-[13px]">
          <RefField id="zone" label="&Zone d'impression :" labelWidth="w-[129px]" value="B5:C15;E5:F15" />
          <div className="mt-px"><SectionTitle>Titres à imprimer</SectionTitle></div>
          <div className="mt-[5px] flex flex-col gap-1 pl-[14px]">
            <RefField id="lignes" label="&Lignes à répéter en haut :" labelWidth="w-[190px]" value="$2:$2" />
            <RefField id="colonnes" label="&Colonnes à répéter à gauche :" labelWidth="w-[190px]" value="$A:$A" />
          </div>

          <div className="mt-[7px]"><SectionTitle>Impression</SectionTitle></div>
          <div className="flex justify-between pt-[3px] pl-[14px]">
            <div>
              {checks.map((text) => (
                <label key={text} className="flex h-[25px] items-center gap-[5px]">
                  <input type="checkbox" className="size-4 appearance-none border border-[#333] bg-white checked:bg-[#333]" />
                  <Mnemonic text={text} />
                </label>
              ))}
            </div>
            <div className="flex flex-col gap-1 pt-0.5">
              <DialogSelect id="commentaires" label="Comment&aires :" value="(Aucun)" />
              <DialogSelect id="erreurs" label="Erre&urs de cellule comme :" value="affiché" />
            </div>
          </div>

          <div className="mt-[5px]"><SectionTitle>Ordre des pages</SectionTitle></div>
          <div className="flex items-start pl-[14px]">
            <div className="w-[185px] pt-[3px]">
              {orders.map((text, i) => (
                <label key={text} className="flex h-[25px] items-center gap-[5px] whitespace-nowrap">
                  <input
                    type="radio"
                    name="ordre"
                    defaultChecked={i === 0}
                    className="size-4 appearance-none rounded-full border border-[#333] bg-white checked:bg-[#333] checked:shadow-[inset_0_0_0_2px_#fff]"
                  />
                  <Mnemonic text={text} />
                </label>
              ))}
            </div>
            <div className="pt-[5px]"><PageOrderPreview /></div>
          </div>

          <div className="mt-[68px] flex justify-end gap-[15px] pr-px">
            <button className={pushButton}><Mnemonic text="&Imprimer..." /></button>
            <button className={pushButton}><Mnemonic text="Aper&çu" /></button>
            <button className={pushButton}><Mnemonic text="&Options..." /></button>
          </div>
        </div>

        <div className="mt-3 flex justify-end gap-[15px]">
          <button className="h-[29px] w-28 border-2 border-[#0f78d0] bg-[#e2e1e2]">OK</button>
          <button className={pushButton}>Annuler</button>
        </div>
      </div>
    </div>
  );
}

export default function App() {
  return (
    <div className="relative flex h-screen flex-col overflow-hidden bg-[#e6e5e6] font-['Open_Sans','Noto_Sans',sans-serif]">
      <TitleBar />
      <Ribbon />
      <FormulaBar />
      <div className="mt-[14px] flex min-h-0 flex-1">
        <div className="flex min-w-0 flex-1 flex-col">
          <Outline />
          <div className="flex min-h-0 flex-1"><Sheet /></div>
        </div>
        <VerticalScroll />
      </div>
      <SheetTabs />
      <StatusBar />
      <PageSetupDialog />
    </div>
  );
}
